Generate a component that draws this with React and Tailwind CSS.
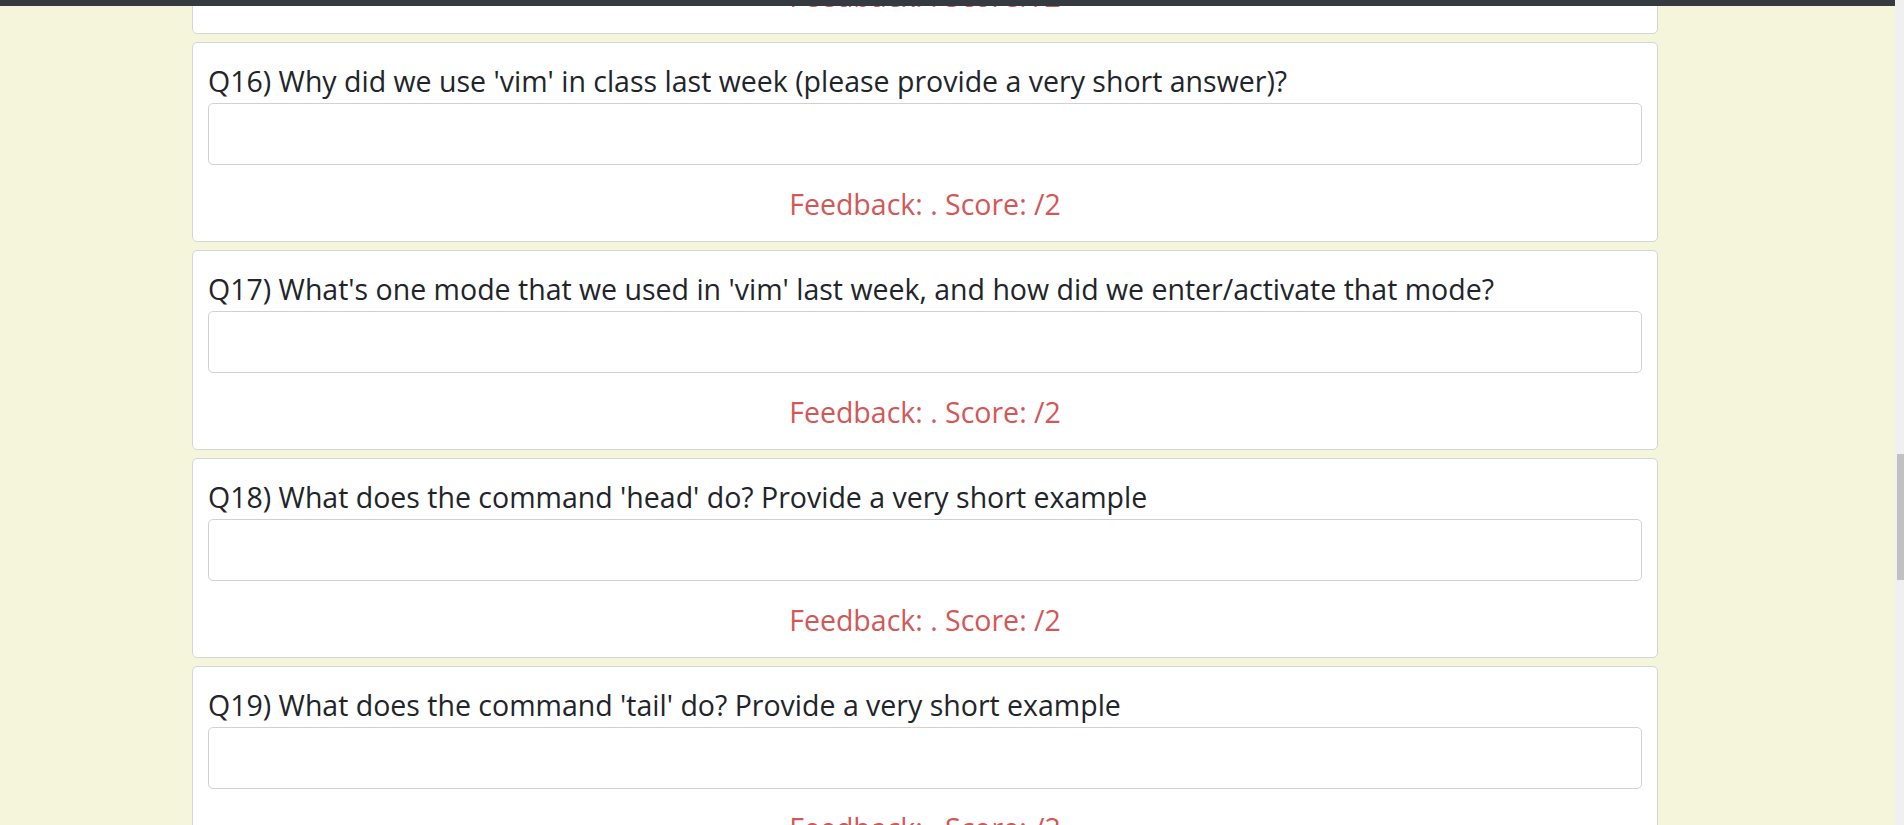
import React from "react";

const questions = [
  { id: 15, text: "Q15) What does the command 'cat' do?" },
  { id: 16, text: "Q16) Why did we use 'vim' in class last week (please provide a very short answer)?" },
  { id: 17, text: "Q17) What's one mode that we used in 'vim' last week, and how did we enter/activate that mode?" },
  { id: 18, text: "Q18) What does the command 'head' do? Provide a very short example" },
  { id: 19, text: "Q19) What does the command 'tail' do? Provide a very short example" },
];

const QuestionCard = ({ q }) => (
  <div className="bg-white border border-[#d6d6d6] rounded-[5px] px-[15px] pt-[20px] pb-[19px]">
    <p className="text-[28.5px] leading-[36px] text-[#212529]">{q.text}</p>
    <input
      type="text"
      className="mt-[4px] block w-full h-[62px] border border-[#d2d2d2] rounded-[5px] bg-white px-3 text-[26px] outline-none"
    />
    <p className="mt-[21px] text-center text-[28.5px] leading-[36px] text-[#d35757]">
      Feedback: . Score: /2
    </p>
  </div>
);

export default function App() {
  return (
    <div
      className="flex h-[825px] w-full overflow-hidden bg-[#f5f5dc]"
      style={{ fontFamily: '"Open Sans", "Noto Sans", sans-serif' }}
    >
      <div className="relative flex-1 overflow-hidden">
        {/* barra superior fija */}
        <div className="absolute top-0 left-0 right-0 z-10 h-[6px] bg-[#343a40]"></div>
        <div className="ml-[192px] w-[1466px] -mt-[166px] flex flex-col gap-[8px]">
          {questions.map((q) => (
            <QuestionCard key={q.id} q={q} />
          ))}
        </div>
      </div>
      {/* scrollbar */}
      <div className="relative w-[9px] bg-[#f0f0f0]">
        <div className="absolute left-[2px] right-0 top-[454px] h-[126px] bg-[#c1c1c1]"></div>
      </div>
    </div>
  );
}
